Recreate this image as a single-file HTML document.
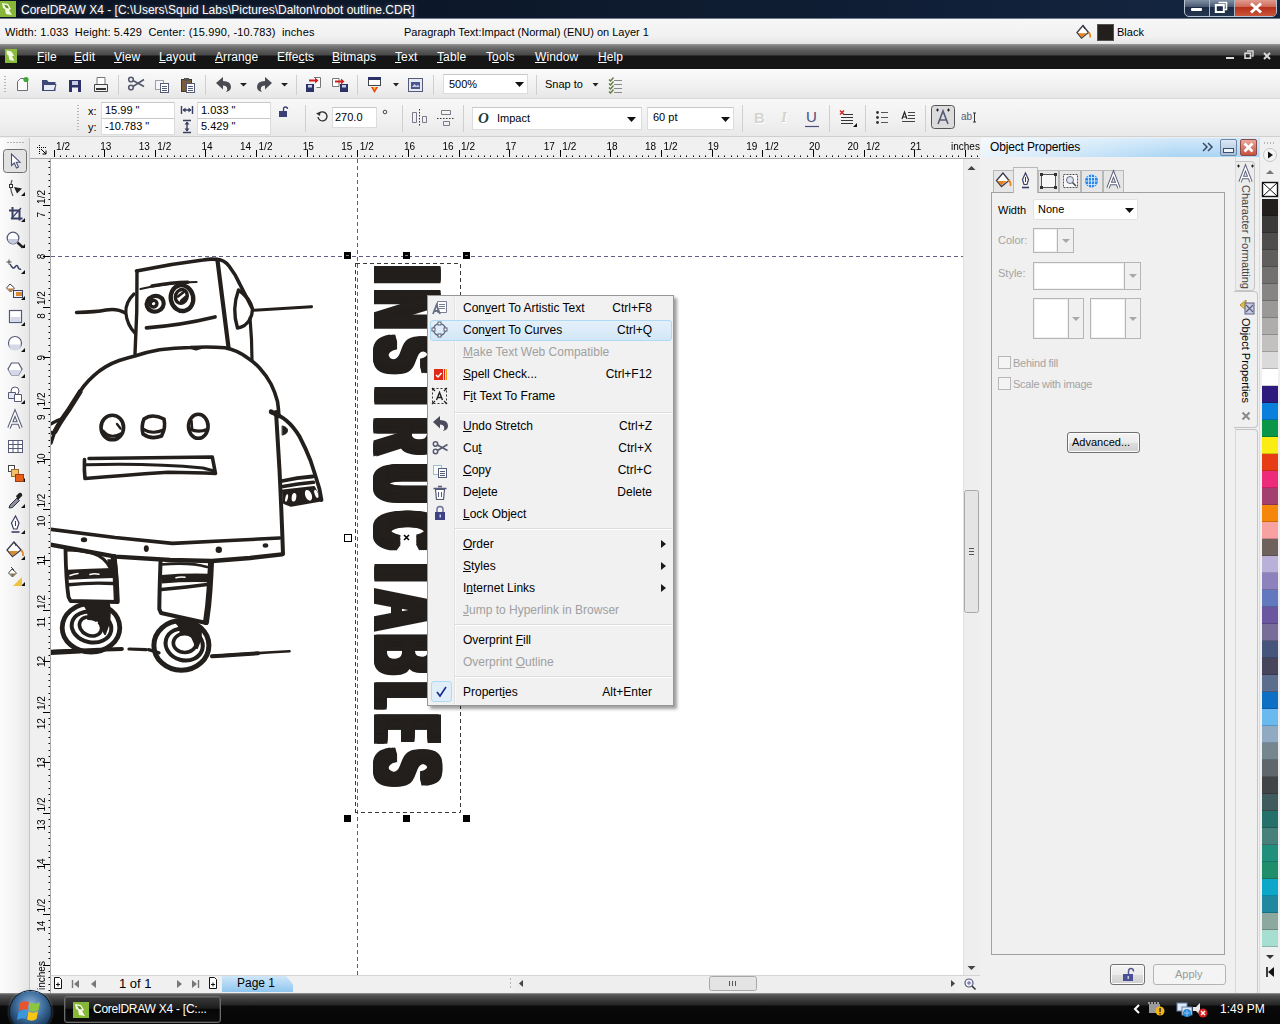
<!DOCTYPE html>
<html lang="en"><head><meta charset="utf-8"><title>CorelDRAW X4 - robot outline.CDR</title>
<style>
*{box-sizing:border-box;margin:0;padding:0}
html,body{width:1280px;height:1024px;overflow:hidden;background:#f0f0f0}
body{font-family:"Liberation Sans",sans-serif;font-size:12px;color:#000}
#screen{position:relative;width:1280px;height:1024px;overflow:hidden;background:#f0f0f0}
.abs{position:absolute}
.t{position:absolute;white-space:nowrap;line-height:1}
u{text-decoration:underline;text-underline-offset:1px}
svg{position:absolute;overflow:visible}
/* title */
#title{position:absolute;left:0;top:0;width:1280px;height:19px;background:linear-gradient(90deg,#0b1424 0%,#0d192c 45%,#11213a 80%,#142640 100%)}
#status{position:absolute;left:0;top:19px;width:1280px;height:25px;background:linear-gradient(#f7f7f7,#f1f1f1 70%,#e4e4e4)}
#menubar{position:absolute;left:0;top:44px;width:1280px;height:25px;background:linear-gradient(#9a9a9a 0,#7a7a7a 2px,#5e5e5e 6px,#474747 11px,#151515 12px,#151515 100%)}
#menubar .t{color:#fff;font-size:12px;top:7px;letter-spacing:.1px}
#toolbar{position:absolute;left:0;top:69px;width:1280px;height:30px;background:linear-gradient(#fbfbfb,#f0f0f0 60%,#e6e6e6)}
#propbar{position:absolute;left:0;top:99px;width:1280px;height:38px;background:linear-gradient(#f8f8f8,#f0f0f0 60%,#e9e9e9);border-bottom:1px solid #d0d0d0}
.inp{position:absolute;background:#fff;border:1px solid #dcdcdc;border-top-color:#c8c8c8;font-size:12px;line-height:14px;padding-left:3px;white-space:nowrap}
.sep{position:absolute;width:1px;background:#cfcfcf}
#ctx{position:absolute;left:427px;top:295px;width:247px;height:411px;background:#f1f1f1;border:1px solid #979797;box-shadow:3px 3px 3px rgba(0,0,0,.38);font-size:12px}
#ctx .mi{position:absolute;left:35px;white-space:nowrap;line-height:14px;height:14px}
#ctx .sc{position:absolute;right:21px;white-space:nowrap;line-height:14px;height:14px}
#ctx .g{color:#a0a0a0}
#ctx .sp{position:absolute;left:27px;right:1px;height:2px;border-top:1px solid #dcdcdc;background:#fff}
#ctx .ar{position:absolute;left:233px;width:0;height:0;border-left:5px solid #1a1a1a;border-top:4px solid transparent;border-bottom:4px solid transparent}
#docker{position:absolute;left:981px;top:138px;width:278px;height:855px;background:#f0f0f0;font-size:11px}
#docker .lbl{position:absolute;white-space:nowrap;line-height:12px}
#docker .gr{color:#a3a3a3}
.dbox{position:absolute;background:#fff;border:1px solid #b5b5b5;box-shadow:inset 0 0 0 1px #f0f0f0}
.ddrop{position:absolute;background:#f0f0f0;border:1px solid #b5b5b5}
.ddrop:after{content:"";position:absolute;left:50%;top:50%;margin:-2px 0 0 -4px;border-top:4px solid #a8a8a8;border-left:4px solid transparent;border-right:4px solid transparent}

</style></head>
<body>
<div id="screen">
<div id="title">
  <svg style="left:0;top:1px" width="17" height="17" viewBox="0 0 17 17"><rect x="0" y="0" width="16" height="16" fill="#86b738"/><path d="M2 2 L8 3 L11 8 L9 9 L12 14 L6 13 L5 8 L3 7 Z" fill="#f4f9e4"/><path d="M4 3.5 L7.5 4.5 L9 7.5 L6 7 Z" fill="#5e8f1e"/></svg>
  <div class="t" style="left:21px;top:4px;font-size:12px;color:#fff;letter-spacing:0;text-shadow:0 0 4px rgba(255,255,255,.35)">CorelDRAW X4 - [C:\Users\Squid Labs\Pictures\Dalton\robot outline.CDR]</div>
  <div class="abs" style="left:1184px;top:-2px;width:93px;height:19px;border:1px solid #b9c3d1;border-radius:0 0 5px 5px;background:linear-gradient(#8a98ac,#4a5a72 45%,#1c2b44 50%,#253650)"></div>
  <div class="abs" style="left:1209px;top:0;width:1px;height:16px;background:#aab4c3"></div>
  <div class="abs" style="left:1234px;top:0;width:1px;height:16px;background:#aab4c3"></div>
  <div class="abs" style="left:1235px;top:-1px;width:41px;height:17px;border-radius:0 0 4px 0;background:linear-gradient(#e2a496,#cf6a58 45%,#b8311c 50%,#c8553a)"></div>
  <div class="abs" style="left:1191px;top:8px;width:11px;height:3px;background:#fff;border-radius:1px"></div>
  <svg style="left:1214px;top:1px" width="14" height="13" viewBox="0 0 14 13"><path d="M4.5 1.5h8v7h-2" fill="none" stroke="#fff" stroke-width="1.6"/><rect x="1.8" y="4" width="8" height="7" fill="none" stroke="#fff" stroke-width="2"/></svg>
  <svg style="left:1249px;top:2px" width="14" height="12" viewBox="0 0 14 12"><path d="M2 1.5L12 10.5M12 1.5L2 10.5" stroke="#fff" stroke-width="3"/></svg>
</div>
<div class="abs" style="left:0;top:18px;width:1280px;height:1px;background:#6d7a8c"></div>
<div id="status">
  <div class="t" style="left:5px;top:8px;font-size:11px;letter-spacing:0.14px">Width: 1.033&nbsp; Height: 5.429&nbsp; Center: (15.990, -10.783)&nbsp; inches</div>
  <div class="t" style="left:404px;top:8px;font-size:11px">Paragraph Text:Impact (Normal) (ENU) on Layer 1</div>
  <svg style="left:1075px;top:5px" width="18" height="16" viewBox="0 0 18 16"><path d="M8 1.5l-6 7 4.5 5.5 7-5.5z" fill="#fff" stroke="#3a3a4a" stroke-width="1.3"/><path d="M3.2 9.2h8.6l-5.3 4.3z" fill="#e8821e"/><path d="M8 1.5l2 3.5" stroke="#3a3a4a" stroke-width="1.3" fill="none"/><path d="M13.5 8.5q2.2 1.5 1.7 5" stroke="#e8821e" stroke-width="1.6" fill="none"/></svg>
  <div class="abs" style="left:1097px;top:5px;width:17px;height:17px;background:#231f1c;border:1px solid #55504c"></div>
  <div class="t" style="left:1117px;top:8px;font-size:11px">Black</div>
</div>
<div class="abs" style="left:0;top:44px;width:1280px;height:1px;background:#4a4a4a"></div>
<div id="menubar">
  <svg style="left:4px;top:4px" width="14" height="16" viewBox="0 0 14 16"><rect x="1" y="1" width="12" height="14" fill="#8bbb3d"/><path d="M2.5 2.5l5 1 2.5 4-2 1 2.5 4.5-5-1-1-4.5-1.5-1z" fill="#f4f9e4"/></svg>
  <div class="t" style="left:37px"><u>F</u>ile</div>
  <div class="t" style="left:74px"><u>E</u>dit</div>
  <div class="t" style="left:114px"><u>V</u>iew</div>
  <div class="t" style="left:159px"><u>L</u>ayout</div>
  <div class="t" style="left:215px"><u>A</u>rrange</div>
  <div class="t" style="left:277px">Effe<u>c</u>ts</div>
  <div class="t" style="left:332px"><u>B</u>itmaps</div>
  <div class="t" style="left:395px"><u>T</u>ext</div>
  <div class="t" style="left:437px"><u>T</u>able</div>
  <div class="t" style="left:486px">T<u>o</u>ols</div>
  <div class="t" style="left:535px"><u>W</u>indow</div>
  <div class="t" style="left:598px"><u>H</u>elp</div>
  <div class="abs" style="left:1226px;top:13px;width:8px;height:2px;background:#d8d8d8"></div>
  <svg style="left:1244px;top:6px" width="10" height="10" viewBox="0 0 10 10"><path d="M3 1h6v5h-1.5" fill="none" stroke="#d8d8d8" stroke-width="1.4"/><rect x="1" y="3.2" width="5.5" height="5" fill="none" stroke="#d8d8d8" stroke-width="1.6"/></svg>
  <svg style="left:1263px;top:8px" width="8" height="8" viewBox="0 0 8 8"><path d="M1 1l6 6M7 1l-6 6" stroke="#d8d8d8" stroke-width="2"/></svg>
</div>

<div id="toolbar">
  <svg style="left:0;top:0" width="640" height="30" viewBox="0 0 640 30">
    <g fill="#b5b5b5"><rect x="4" y="7" width="2" height="1"/><rect x="4" y="10" width="2" height="1"/><rect x="4" y="13" width="2" height="1"/><rect x="4" y="16" width="2" height="1"/><rect x="4" y="19" width="2" height="1"/><rect x="4" y="22" width="2" height="1"/></g>
    <!-- new -->
    <path d="M17.5 12.5l3-3h7v12h-10z" fill="#fbfbfb" stroke="#6b6b7a" stroke-width="1"/><circle cx="26" cy="10.5" r="2.6" fill="#3fa63a"/>
    <!-- open -->
    <path d="M42 11h5l1.5 2h7v9H42z" fill="#3d4a78"/><path d="M43.5 15.500h12.500l-2 6h-10.500z" fill="#e9ecf5" stroke="#3d4a78" stroke-width="1"/>
    <!-- save -->
    <rect x="69" y="11" width="12" height="12" fill="#2c3266"/><rect x="72" y="12" width="6" height="4" fill="#c9cde6"/><rect x="72" y="18.500" width="6" height="4.500" fill="#f2f2f8"/>
    <!-- print -->
    <path d="M97 8.500h8v7h-8z" fill="#fff" stroke="#777" stroke-width="1"/><path d="M94.500 15.500h13v7h-13z" fill="#f3f3f3" stroke="#444" stroke-width="1"/><rect x="96" y="19" width="10" height="2" fill="#333"/>
    <rect x="118" y="6" width="1" height="20" fill="#cfcfcf"/>
    <!-- cut -->
    <g fill="none" stroke="#555a70" stroke-width="1.600"><circle cx="131" cy="10.500" r="2.300"/><circle cx="131" cy="18.500" r="2.300"/><path d="M133 11.500l11 6M133 17.500l11-7"/></g>
    <!-- copy -->
    <rect x="155.500" y="11.500" width="8" height="9" fill="#f5f5f8" stroke="#9a9fb0"/><rect x="160.500" y="14.500" width="8" height="9" fill="#fff" stroke="#555a78"/><path d="M162 17.500h5M162 19.500h5M162 21.500h5" stroke="#555a78" stroke-width="1"/>
    <!-- paste -->
    <rect x="181.500" y="10.500" width="10" height="12" fill="#7a5b3a" stroke="#4a3826"/><rect x="184" y="9" width="5" height="3" fill="#555"/><rect x="186.500" y="14.500" width="8" height="9" fill="#fff" stroke="#555a78"/><path d="M188 17.500h5M188 19.500h5M188 21.500h5" stroke="#555a78" stroke-width="1"/>
    <rect x="205" y="6" width="1" height="20" fill="#cfcfcf"/>
    <!-- undo -->
    <path d="M216 14l7-6v4q8 0 8 6q0 4-5 5q2-2 1-4.500q-1-2-4-2v4z" fill="#4a4a52"/>
    <path d="M240 14h7l-3.500 3.500z" fill="#222"/>
    <!-- redo -->
    <path d="M272 14l-7-6v4q-8 0-8 6q0 4 5 5q-2-2-1-4.500q1-2 4-2v4z" fill="#4a4a52"/>
    <path d="M281 14h7l-3.500 3.500z" fill="#222"/>
    <rect x="296" y="6" width="1" height="20" fill="#cfcfcf"/>
    <!-- import -->
    <rect x="306" y="15" width="8" height="8" fill="#2c3266"/><rect x="308" y="16" width="4" height="2.500" fill="#c9cde6"/><path d="M314 8.500h6.500v10h-4" fill="#fff" stroke="#777"/><path d="M309 11.500h7" stroke="#d02020" stroke-width="2"/><path d="M315 8.500l3.500 3-3.500 3z" fill="#d02020"/>
    <!-- export -->
    <rect x="340" y="15" width="8" height="8" fill="#2c3266"/><rect x="342" y="16" width="4" height="2.500" fill="#c9cde6"/><path d="M332.500 9.500h6.500v8h-6.500z" fill="#fff" stroke="#777"/><path d="M335 12.500h7" stroke="#d02020" stroke-width="2"/><path d="M341 9.500l3.500 3-3.500 3z" fill="#d02020"/>
    <rect x="357" y="6" width="1" height="20" fill="#cfcfcf"/>
    <!-- launcher -->
    <rect x="368.500" y="8.500" width="12" height="8" fill="#fff" stroke="#444"/><rect x="368" y="8" width="13" height="3" fill="#2c3266"/><path d="M371 18h7l-3.500 6z" fill="#e8401a"/><path d="M373 18h3l-1.500 3.500z" fill="#f9c21a"/>
    <path d="M393 14h6l-3 3.500z" fill="#222"/>
    <!-- welcome -->
    <rect x="408.500" y="9.500" width="14" height="13" fill="#e6e8f2" stroke="#555a78"/><rect x="411" y="13" width="9" height="7" fill="#4a5590"/><path d="M412 18l2.500-3 2 2 1.500-1.500 1.500 2.500z" fill="#c9cde6"/>
    <rect x="433" y="6" width="1" height="20" fill="#cfcfcf"/>
    <rect x="536" y="6" width="1" height="20" fill="#cfcfcf"/>
    <path d="M592.500 14h6l-3 3.500z" fill="#222"/>
    <!-- snap icon -->
    <g stroke="#888" stroke-width="1"><path d="M614 11.500h8M614 15.500h8M614 19.500h8M614 23.500h8"/></g><g stroke="#5a7a3a" stroke-width="1.300" fill="none"><path d="M609 10.500l1.500 1.500 3-3.500M609 14.500l1.500 1.500 3-3.500M609 18.500l1.500 1.500 3-3.500M609 22.500l1.500 1.500 3-3.500"/></g>
  </svg>
  <div class="inp" style="left:443px;top:5px;width:85px;height:20px;padding-left:5px;line-height:18px;font-size:11px">500%</div>
  <svg style="left:515px;top:13px" width="9" height="5" viewBox="0 0 9 5"><path d="M0 0h9l-4.500 5z" fill="#111"/></svg>
  <div class="t" style="left:545px;top:10px;font-size:11px">Snap to</div>
</div>
<div class="abs" style="left:0;top:98px;width:1280px;height:1px;background:#dadada"></div>
<div id="propbar">
  <svg style="left:0;top:0" width="1000" height="38" viewBox="0 0 1000 38">
    <g fill="#b5b5b5"><rect x="77" y="6" width="2" height="1"/><rect x="77" y="9" width="2" height="1"/><rect x="77" y="12" width="2" height="1"/><rect x="77" y="15" width="2" height="1"/><rect x="77" y="18" width="2" height="1"/><rect x="77" y="21" width="2" height="1"/><rect x="77" y="24" width="2" height="1"/><rect x="77" y="27" width="2" height="1"/><rect x="77" y="30" width="2" height="1"/></g>
    <!-- width icon -->
    <path d="M181.500 7v8M192.500 7v8M183 11h8" stroke="#3a4060" stroke-width="1.400"/><path d="M182.500 11l3-2.500v5zM191.500 11l-3-2.500v5z" fill="#3a4060"/>
    <path d="M183 21.500h8M183 33.500h8M187 23v9" stroke="#3a4060" stroke-width="1.400"/><path d="M187 22.500l-2.500 3h5zM187 32.500l-2.500-3h5z" fill="#3a4060"/>
    <!-- lock -->
    <rect x="279" y="12" width="8" height="6" fill="#3a3f78"/><path d="M283.500 12v-2q0-2 2-2t2 2" fill="none" stroke="#3a3f78" stroke-width="1.300"/>
    <rect x="305" y="6" width="1" height="27" fill="#cfcfcf"/>
    <!-- rotate -->
    <path d="M318 18a4.500 4.500 0 1 0 1.500-4" fill="none" stroke="#333" stroke-width="1.400"/><path d="M316 14.500l4.500-2-0.500 4.500z" fill="#333"/>
    <circle cx="385" cy="13" r="1.800" fill="none" stroke="#444" stroke-width="1"/>
    <rect x="402" y="6" width="1" height="27" fill="#cfcfcf"/>
    <!-- mirror icons -->
    <g fill="none" stroke="#7a7a8a" stroke-width="1"><path d="M412.500 13.500h4v10h-4zM422.500 17.500h4v6h-4z"/><path d="M419.500 10v17" stroke-dasharray="1.500 1.500" stroke="#333"/></g>
    <g fill="none" stroke="#7a7a8a" stroke-width="1"><path d="M441.500 11.500h9v4h-9zM443.500 22.500h6v4h-6z"/><path d="M437 19.500h17" stroke-dasharray="1.500 1.500" stroke="#333"/></g>
    <rect x="463" y="6" width="1" height="27" fill="#cfcfcf"/>
    <rect x="742" y="6" width="1" height="27" fill="#cfcfcf"/>
    <rect x="829" y="6" width="1" height="27" fill="#cfcfcf"/>
    <!-- U underline -->
    <path d="M805 27.500h14" stroke="#4a4f80" stroke-width="1.200"/>
    <!-- lines with red x -->
    <g stroke="#333" stroke-width="1.200"><path d="M843 15.500h10M841 18.500h12M841 21.500h12M841 24.500h12"/></g><path d="M840 11.500l4 4M844 11.500l-4 4" stroke="#d02020" stroke-width="1.400"/><path d="M857 24v4h-4z" fill="#111"/>
    <rect x="865" y="6" width="1" height="27" fill="#cfcfcf"/>
    <!-- bullets -->
    <g fill="#333"><circle cx="877.500" cy="13.500" r="1.400"/><circle cx="877.500" cy="18.500" r="1.400"/><circle cx="877.500" cy="23.500" r="1.400"/></g><g stroke="#555" stroke-width="1.200"><path d="M881 13.500h7M881 18.500h7M881 23.500h7"/></g>
    <!-- dropcap -->
    <g stroke="#444" stroke-width="1"><path d="M908 13.500h7M908 16.500h7M908 19.500h7M902 22.500h13"/></g><path d="M902 20l2.500-7 2.500 7M903 18h3" stroke="#222" stroke-width="1.200" fill="none"/>
    <rect x="925" y="6" width="1" height="27" fill="#cfcfcf"/>
    <!-- A frame button -->
    <rect x="931.500" y="6.500" width="23" height="23" rx="3" fill="#dcdcdc" stroke="#555"/>
    <path d="M938 25l5-13 5 13M940 21h6" fill="none" stroke="#555a78" stroke-width="1.600"/><path d="M936 11h3M937.500 9.500v3M947 11h3M948.500 9.500v3" stroke="#222" stroke-width="1"/>
    <path d="M974.500 14v9M973 14h3M973 23h3" stroke="#333" stroke-width="1"/>
  </svg>
  <div class="t" style="left:88px;top:7px;font-size:11px">x:</div>
  <div class="t" style="left:88px;top:23px;font-size:11px">y:</div>
  <div class="inp" style="left:101px;top:3px;width:74px;height:17px;font-size:11px;line-height:15px">15.99 "</div>
  <div class="inp" style="left:101px;top:19px;width:74px;height:17px;font-size:11px;line-height:15px">-10.783 "</div>
  <div class="inp" style="left:197px;top:3px;width:74px;height:17px;font-size:11px;line-height:15px">1.033 "</div>
  <div class="inp" style="left:197px;top:19px;width:74px;height:17px;font-size:11px;line-height:15px">5.429 "</div>
  <div class="inp" style="left:332px;top:8px;width:45px;height:21px;font-size:11px;line-height:19px;padding-left:2px">270.0</div>
  <div class="inp" style="left:472px;top:8px;width:170px;height:23px;font-size:11px;line-height:21px;padding-left:24px">Impact</div>
  <div class="t" style="left:478px;top:12px;font-family:'Liberation Serif',serif;font-style:italic;font-weight:bold;font-size:15px;color:#1c3b34">O</div>
  <svg style="left:627px;top:18px" width="9" height="5" viewBox="0 0 9 5"><path d="M0 0h9l-4.500 5z" fill="#111"/></svg>
  <div class="inp" style="left:647px;top:8px;width:87px;height:23px;font-size:11px;line-height:19px;padding-left:5px">60 pt</div>
  <svg style="left:721px;top:18px" width="9" height="5" viewBox="0 0 9 5"><path d="M0 0h9l-4.500 5z" fill="#111"/></svg>
  <div class="t" style="left:754px;top:11px;font-size:15px;font-weight:bold;color:#d4d4d4;text-shadow:1px 1px 0 #fff">B</div>
  <div class="t" style="left:781px;top:11px;font-size:15px;font-weight:bold;font-style:italic;color:#d4d4d4;font-family:'Liberation Serif',serif;text-shadow:1px 1px 0 #fff">I</div>
  <div class="t" style="left:806px;top:10px;font-size:15px;color:#4a4f80">U</div>
  <div class="t" style="left:961px;top:13px;font-size:10px;color:#555a78">ab</div>
</div>

<!-- toolbox -->
<div class="abs" style="left:0;top:138px;width:30px;height:855px;background:linear-gradient(90deg,#fcfcfc,#f2f2f2 60%,#e6e6e6);border-right:1px solid #c4c4c4"></div>
<!-- canvas -->
<div class="abs" style="left:51px;top:159px;width:912px;height:816px;background:#fff"></div>
<div class="abs" style="left:30px;top:138px;width:950px;height:21px;background:#f0f0f0;border-bottom:1px solid #a8a8a8"></div>
<div class="abs" style="left:30px;top:159px;width:21px;height:834px;background:#f0f0f0;border-right:1px solid #a8a8a8"></div>
<svg style="left:0;top:0;filter:grayscale(1)" width="1280" height="1024" viewBox="0 0 1280 1024" font-family="Liberation Sans, sans-serif" font-size="10" fill="#000">
<path d="M54.5 150v7M60.5 155.5v1.500M66.5 155.5v1.500M73.5 155.5v1.500M79.5 155.5v1.500M85.5 155.5v1.500M92.5 155.5v1.500M98.5 155.5v1.500M104.5 150v7M111.5 155.5v1.500M117.5 155.5v1.500M123.5 155.5v1.500M130.5 155.5v1.500M136.5 155.5v1.500M142.5 155.5v1.500M148.5 155.5v1.500M155.5 150v7M161.5 155.5v1.500M167.5 155.5v1.500M174.5 155.5v1.500M180.5 155.5v1.500M186.5 155.5v1.500M193.5 155.5v1.500M199.5 155.5v1.500M205.5 150v7M212.5 155.5v1.500M218.5 155.5v1.500M224.5 155.5v1.500M231.5 155.5v1.500M237.5 155.5v1.500M243.5 155.5v1.500M250.5 155.5v1.500M256.5 150v7M262.5 155.5v1.500M269.5 155.5v1.500M275.5 155.5v1.500M281.5 155.5v1.500M288.5 155.5v1.500M294.5 155.5v1.500M300.5 155.5v1.500M307.5 150v7M313.5 155.5v1.500M319.5 155.5v1.500M326.5 155.5v1.500M332.5 155.5v1.500M338.5 155.5v1.500M345.5 155.5v1.500M351.5 155.5v1.500M357.5 150v7M364.5 155.5v1.500M370.5 155.5v1.500M376.5 155.5v1.500M383.5 155.5v1.500M389.5 155.5v1.500M395.5 155.5v1.500M402.5 155.5v1.500M408.5 150v7M414.5 155.5v1.500M421.5 155.5v1.500M427.5 155.5v1.500M433.5 155.5v1.500M440.5 155.5v1.500M446.5 155.5v1.500M452.5 155.5v1.500M459.5 150v7M465.5 155.5v1.500M471.5 155.5v1.500M478.5 155.5v1.500M484.5 155.5v1.500M490.5 155.5v1.500M497.5 155.5v1.500M503.5 155.5v1.500M509.5 150v7M516.5 155.5v1.500M522.5 155.5v1.500M528.5 155.5v1.500M535.5 155.5v1.500M541.5 155.5v1.500M547.5 155.5v1.500M553.5 155.5v1.500M560.5 150v7M566.5 155.5v1.500M572.5 155.5v1.500M579.5 155.5v1.500M585.5 155.5v1.500M591.5 155.5v1.500M598.5 155.5v1.500M604.5 155.5v1.500M610.5 150v7M617.5 155.5v1.500M623.5 155.5v1.500M629.5 155.5v1.500M636.5 155.5v1.500M642.5 155.5v1.500M648.5 155.5v1.500M655.5 155.5v1.500M661.5 150v7M667.5 155.5v1.500M674.5 155.5v1.500M680.5 155.5v1.500M686.5 155.5v1.500M693.5 155.5v1.500M699.5 155.5v1.500M705.5 155.5v1.500M712.5 150v7M718.5 155.5v1.500M724.5 155.5v1.500M731.5 155.5v1.500M737.5 155.5v1.500M743.5 155.5v1.500M750.5 155.5v1.500M756.5 155.5v1.500M762.5 150v7M769.5 155.5v1.500M775.5 155.5v1.500M781.5 155.5v1.500M788.5 155.5v1.500M794.5 155.5v1.500M800.5 155.5v1.500M807.5 155.5v1.500M813.5 150v7M819.5 155.5v1.500M826.5 155.5v1.500M832.5 155.5v1.500M838.5 155.5v1.500M845.5 155.5v1.500M851.5 155.5v1.500M857.5 155.5v1.500M864.5 150v7M870.5 155.5v1.500M876.5 155.5v1.500M883.5 155.5v1.500M889.5 155.5v1.500M895.5 155.5v1.500M902.5 155.5v1.500M908.5 155.5v1.500M914.5 150v7M921.5 155.5v1.500M927.5 155.5v1.500M933.5 155.5v1.500M940.5 155.5v1.500M946.5 155.5v1.500M952.5 155.5v1.500M958.5 155.5v1.500M965.5 150v7M971.5 155.5v1.500M977.5 155.5v1.500" stroke="#000" stroke-width="1" fill="none"/>
<text x="56.08" y="150">1/2</text>
<text x="105.7" y="150" text-anchor="middle">13</text>
<text x="149.82" y="150" text-anchor="end">13</text>
<text x="157.32" y="150">1/2</text>
<text x="206.95" y="150" text-anchor="middle">14</text>
<text x="251.07" y="150" text-anchor="end">14</text>
<text x="258.57" y="150">1/2</text>
<text x="308.2" y="150" text-anchor="middle">15</text>
<text x="352.32" y="150" text-anchor="end">15</text>
<text x="359.82" y="150">1/2</text>
<text x="409.45" y="150" text-anchor="middle">16</text>
<text x="453.57" y="150" text-anchor="end">16</text>
<text x="461.07" y="150">1/2</text>
<text x="510.7" y="150" text-anchor="middle">17</text>
<text x="554.83" y="150" text-anchor="end">17</text>
<text x="562.33" y="150">1/2</text>
<text x="611.95" y="150" text-anchor="middle">18</text>
<text x="656.08" y="150" text-anchor="end">18</text>
<text x="663.58" y="150">1/2</text>
<text x="713.2" y="150" text-anchor="middle">19</text>
<text x="757.33" y="150" text-anchor="end">19</text>
<text x="764.83" y="150">1/2</text>
<text x="814.45" y="150" text-anchor="middle">20</text>
<text x="858.58" y="150" text-anchor="end">20</text>
<text x="866.08" y="150">1/2</text>
<text x="915.7" y="150" text-anchor="middle">21</text>
<text x="951" y="150">inches</text>
<path d="M37 147.500h9M39.500 145v9" stroke="#000" stroke-width="1" stroke-dasharray="1 1" fill="none"/><path d="M41 149l5 5M46 154v-3.500M46 154h-3.500" stroke="#000" stroke-width="1" fill="none"/>
<path d="M48.500 161.5h1.500M48.500 167.5h1.500M48.500 174.5h1.500M48.500 180.5h1.500M48.500 186.5h1.500M48.500 193.5h1.500M48.500 199.5h1.500M43 205.5h7M48.500 212.5h1.500M48.500 218.5h1.500M48.500 224.5h1.500M48.500 231.5h1.500M48.500 237.5h1.500M48.500 243.5h1.500M48.500 250.5h1.500M43 256.5h7M48.500 262.5h1.500M48.500 269.5h1.500M48.500 275.5h1.500M48.500 281.5h1.500M48.500 288.5h1.500M48.500 294.5h1.500M48.500 300.5h1.500M43 307.5h7M48.500 313.5h1.500M48.500 319.5h1.500M48.500 326.5h1.500M48.500 332.5h1.500M48.500 338.5h1.500M48.500 345.5h1.500M48.500 351.5h1.500M43 357.5h7M48.500 364.5h1.500M48.500 370.5h1.500M48.500 376.5h1.500M48.500 383.5h1.500M48.500 389.5h1.500M48.500 395.5h1.500M48.500 402.5h1.500M43 408.5h7M48.500 414.5h1.500M48.500 421.5h1.500M48.500 427.5h1.500M48.500 433.5h1.500M48.500 440.5h1.500M48.500 446.5h1.500M48.500 452.5h1.500M43 459.5h7M48.500 465.5h1.500M48.500 471.5h1.500M48.500 477.5h1.500M48.500 484.5h1.500M48.500 490.5h1.500M48.500 496.5h1.500M48.500 503.5h1.500M43 509.5h7M48.500 515.5h1.500M48.500 522.5h1.500M48.500 528.5h1.500M48.500 534.5h1.500M48.500 541.5h1.500M48.500 547.5h1.500M48.500 553.5h1.500M43 560.5h7M48.500 566.5h1.500M48.500 572.5h1.500M48.500 579.5h1.500M48.500 585.5h1.500M48.500 591.5h1.500M48.500 598.5h1.500M48.500 604.5h1.500M43 610.5h7M48.500 617.5h1.500M48.500 623.5h1.500M48.500 629.5h1.500M48.500 636.5h1.500M48.500 642.5h1.500M48.500 648.5h1.500M48.500 655.5h1.500M43 661.5h7M48.500 667.5h1.500M48.500 674.5h1.500M48.500 680.5h1.500M48.500 686.5h1.500M48.500 693.5h1.500M48.500 699.5h1.500M48.500 705.5h1.500M43 712.5h7M48.500 718.5h1.500M48.500 724.5h1.500M48.500 731.5h1.500M48.500 737.5h1.500M48.500 743.5h1.500M48.500 750.5h1.500M48.500 756.5h1.500M43 762.5h7M48.500 769.5h1.500M48.500 775.5h1.500M48.500 781.5h1.500M48.500 788.5h1.500M48.500 794.5h1.500M48.500 800.5h1.500M48.500 807.5h1.500M43 813.5h7M48.500 819.5h1.500M48.500 826.5h1.500M48.500 832.5h1.500M48.500 838.5h1.500M48.500 845.5h1.500M48.500 851.5h1.500M48.500 857.5h1.500M43 864.5h7M48.500 870.5h1.500M48.500 876.5h1.500M48.500 882.5h1.500M48.500 889.5h1.500M48.500 895.5h1.500M48.500 901.5h1.500M48.500 908.5h1.500M43 914.5h7M48.500 920.5h1.500M48.500 927.5h1.500M48.500 933.5h1.500M48.500 939.5h1.500M48.500 946.5h1.500M48.500 952.5h1.500M48.500 958.5h1.500M43 965.5h7M48.500 971.5h1.500M48.500 977.5h1.500M48.500 984.5h1.500M48.500 990.5h1.500" stroke="#000" stroke-width="1" fill="none"/>
<text transform="translate(45 211.88) rotate(-90)" text-anchor="end">7</text>
<text transform="translate(45 203.88) rotate(-90)">1/2</text>
<text transform="translate(45 256.5) rotate(-90)" text-anchor="middle">8</text>
<text transform="translate(45 313.12) rotate(-90)" text-anchor="end">8</text>
<text transform="translate(45 305.12) rotate(-90)">1/2</text>
<text transform="translate(45 357.75) rotate(-90)" text-anchor="middle">9</text>
<text transform="translate(45 414.38) rotate(-90)" text-anchor="end">9</text>
<text transform="translate(45 406.38) rotate(-90)">1/2</text>
<text transform="translate(45 459) rotate(-90)" text-anchor="middle">10</text>
<text transform="translate(45 515.62) rotate(-90)" text-anchor="end">10</text>
<text transform="translate(45 507.62) rotate(-90)">1/2</text>
<text transform="translate(45 560.25) rotate(-90)" text-anchor="middle">11</text>
<text transform="translate(45 616.88) rotate(-90)" text-anchor="end">11</text>
<text transform="translate(45 608.88) rotate(-90)">1/2</text>
<text transform="translate(45 661.5) rotate(-90)" text-anchor="middle">12</text>
<text transform="translate(45 718.12) rotate(-90)" text-anchor="end">12</text>
<text transform="translate(45 710.12) rotate(-90)">1/2</text>
<text transform="translate(45 762.75) rotate(-90)" text-anchor="middle">13</text>
<text transform="translate(45 819.38) rotate(-90)" text-anchor="end">13</text>
<text transform="translate(45 811.38) rotate(-90)">1/2</text>
<text transform="translate(45 864) rotate(-90)" text-anchor="middle">14</text>
<text transform="translate(45 920.62) rotate(-90)" text-anchor="end">14</text>
<text transform="translate(45 912.62) rotate(-90)">1/2</text>
<text transform="translate(45 990) rotate(-90)">inches</text>
</svg>
<!-- vertical scrollbar -->
<div class="abs" style="left:963px;top:159px;width:17px;height:816px;background:#eeeeee;border-left:1px solid #e2e2e2"></div>
<!-- nav bar -->
<div class="abs" style="left:51px;top:975px;width:929px;height:18px;background:#f0f0f0;border-top:1px solid #d4d4d4"></div>
<!-- guides -->
<svg style="left:0;top:0" width="1280" height="1024" viewBox="0 0 1280 1024">
  <path d="M51 256.500H963" stroke="#5d5d86" stroke-width="1" stroke-dasharray="4 3" fill="none"/>
  <path d="M357.500 159V975" stroke="#5d5d86" stroke-width="1" stroke-dasharray="4 3" fill="none"/>
</svg>
<div id="bigtext" class="abs" style="left:0;top:0;width:0;height:0;font:bold 100px 'Liberation Sans',sans-serif;color:#231f1c"><span class="t" style="left:0;top:0;transform-origin:0 0;transform:translate(456.74px,263.20px) rotate(90deg) scale(0.4000,0.9710);text-shadow:2.9px 0.0px 0 #231f1c,5.7px 0.0px 0 #231f1c,8.6px 0.0px 0 #231f1c,11.5px 0.0px 0 #231f1c,14.4px 0.0px 0 #231f1c,17.2px 0.0px 0 #231f1c,20.1px 0.0px 0 #231f1c,23.0px 0.0px 0 #231f1c,25.9px 0.0px 0 #231f1c,28.7px 0.0px 0 #231f1c">I</span><span class="t" style="left:0;top:0;transform-origin:0 0;transform:translate(456.74px,286.49px) rotate(90deg) scale(0.5293,0.9710);text-shadow:2.8px 0.0px 0 #231f1c,5.7px 0.0px 0 #231f1c,8.5px 0.0px 0 #231f1c,11.3px 0.0px 0 #231f1c,14.2px 0.0px 0 #231f1c">N</span><span class="t" style="left:0;top:0;transform-origin:0 0;transform:translate(453.18px,333.06px) rotate(90deg) scale(0.5467,0.9006);text-shadow:0.0px -2.8px 0 #231f1c,0.0px 2.8px 0 #231f1c,2.6px -2.8px 0 #231f1c,2.6px 0.0px 0 #231f1c,2.6px 2.8px 0 #231f1c,5.1px -2.8px 0 #231f1c,5.1px 0.0px 0 #231f1c,5.1px 2.8px 0 #231f1c,7.7px -2.8px 0 #231f1c,7.7px 0.0px 0 #231f1c,7.7px 2.8px 0 #231f1c,10.2px -2.8px 0 #231f1c,10.2px 0.0px 0 #231f1c,10.2px 2.8px 0 #231f1c,12.8px -2.8px 0 #231f1c,12.8px 0.0px 0 #231f1c,12.8px 2.8px 0 #231f1c">S</span><span class="t" style="left:0;top:0;transform-origin:0 0;transform:translate(456.74px,377.08px) rotate(90deg) scale(0.4237,0.9710);text-shadow:2.7px 0.0px 0 #231f1c,5.4px 0.0px 0 #231f1c,8.1px 0.0px 0 #231f1c,10.9px 0.0px 0 #231f1c,13.6px 0.0px 0 #231f1c,16.3px 0.0px 0 #231f1c,19.0px 0.0px 0 #231f1c,21.7px 0.0px 0 #231f1c,24.4px 0.0px 0 #231f1c,27.1px 0.0px 0 #231f1c">T</span><span class="t" style="left:0;top:0;transform-origin:0 0;transform:translate(454.54px,415.10px) rotate(90deg) scale(0.4714,0.9275);text-shadow:0.0px -1.6px 0 #231f1c,0.0px 1.6px 0 #231f1c,2.6px -1.6px 0 #231f1c,2.6px 1.6px 0 #231f1c,5.2px -1.6px 0 #231f1c,5.2px 1.6px 0 #231f1c,7.7px -1.6px 0 #231f1c,7.7px 1.6px 0 #231f1c,10.3px -1.6px 0 #231f1c,10.3px 1.6px 0 #231f1c,12.9px -1.6px 0 #231f1c,12.9px 1.6px 0 #231f1c,15.5px -1.6px 0 #231f1c,15.5px 1.6px 0 #231f1c,18.0px -1.6px 0 #231f1c,18.0px 1.6px 0 #231f1c">R</span><span class="t" style="left:0;top:0;transform-origin:0 0;transform:translate(454.55px,461.15px) rotate(90deg) scale(0.4750,0.9282);text-shadow:0.0px -1.6px 0 #231f1c,0.0px 1.6px 0 #231f1c,2.8px -1.6px 0 #231f1c,2.8px 1.6px 0 #231f1c,5.5px -1.6px 0 #231f1c,5.5px 1.6px 0 #231f1c,8.3px -1.6px 0 #231f1c,8.3px 1.6px 0 #231f1c,11.1px -1.6px 0 #231f1c,11.1px 1.6px 0 #231f1c,13.8px -1.6px 0 #231f1c,13.8px 1.6px 0 #231f1c,16.6px -1.6px 0 #231f1c,16.6px 1.6px 0 #231f1c,19.3px -1.6px 0 #231f1c,19.3px 1.6px 0 #231f1c,22.1px -1.6px 0 #231f1c,22.1px 1.6px 0 #231f1c">U</span><span class="t" style="left:0;top:0;transform-origin:0 0;transform:translate(452.47px,508.74px) rotate(90deg) scale(0.4646,0.8865);text-shadow:0.0px -3.4px 0 #231f1c,0.0px -1.1px 0 #231f1c,0.0px 1.1px 0 #231f1c,0.0px 3.4px 0 #231f1c,2.9px -3.4px 0 #231f1c,2.9px -1.1px 0 #231f1c,2.9px 1.1px 0 #231f1c,2.9px 3.4px 0 #231f1c,5.8px -3.4px 0 #231f1c,5.8px -1.1px 0 #231f1c,5.8px 1.1px 0 #231f1c,5.8px 3.4px 0 #231f1c,8.8px -3.4px 0 #231f1c,8.8px -1.1px 0 #231f1c,8.8px 1.1px 0 #231f1c,8.8px 3.4px 0 #231f1c,11.7px -3.4px 0 #231f1c,11.7px -1.1px 0 #231f1c,11.7px 1.1px 0 #231f1c,11.7px 3.4px 0 #231f1c,14.6px -3.4px 0 #231f1c,14.6px -1.1px 0 #231f1c,14.6px 1.1px 0 #231f1c,14.6px 3.4px 0 #231f1c,17.5px -3.4px 0 #231f1c,17.5px -1.1px 0 #231f1c,17.5px 1.1px 0 #231f1c,17.5px 3.4px 0 #231f1c,20.4px -3.4px 0 #231f1c,20.4px -1.1px 0 #231f1c,20.4px 1.1px 0 #231f1c,20.4px 3.4px 0 #231f1c">C</span><span class="t" style="left:0;top:0;transform-origin:0 0;transform:translate(456.74px,554.08px) rotate(90deg) scale(0.4237,0.9710);text-shadow:2.7px 0.0px 0 #231f1c,5.4px 0.0px 0 #231f1c,8.1px 0.0px 0 #231f1c,10.9px 0.0px 0 #231f1c,13.6px 0.0px 0 #231f1c,16.3px 0.0px 0 #231f1c,19.0px 0.0px 0 #231f1c,21.7px 0.0px 0 #231f1c,24.4px 0.0px 0 #231f1c,27.1px 0.0px 0 #231f1c">T</span><span class="t" style="left:0;top:0;transform-origin:0 0;transform:translate(456.74px,586.70px) rotate(90deg) scale(0.5333,0.9710);text-shadow:3.0px 0.0px 0 #231f1c,6.0px 0.0px 0 #231f1c,9.0px 0.0px 0 #231f1c,12.0px 0.0px 0 #231f1c,15.0px 0.0px 0 #231f1c">A</span><span class="t" style="left:0;top:0;transform-origin:0 0;transform:translate(454.54px,631.34px) rotate(90deg) scale(0.5230,0.9275);text-shadow:0.0px -1.6px 0 #231f1c,0.0px 1.6px 0 #231f1c,2.7px -1.6px 0 #231f1c,2.7px 1.6px 0 #231f1c,5.4px -1.6px 0 #231f1c,5.4px 1.6px 0 #231f1c,8.1px -1.6px 0 #231f1c,8.1px 1.6px 0 #231f1c,10.8px -1.6px 0 #231f1c,10.8px 1.6px 0 #231f1c,13.5px -1.6px 0 #231f1c,13.5px 1.6px 0 #231f1c,16.3px -1.6px 0 #231f1c,16.3px 1.6px 0 #231f1c">B</span><span class="t" style="left:0;top:0;transform-origin:0 0;transform:translate(455.27px,680.43px) rotate(90deg) scale(0.3098,0.9420);text-shadow:0.0px -1.1px 0 #231f1c,0.0px 1.1px 0 #231f1c,3.0px -1.1px 0 #231f1c,3.0px 1.1px 0 #231f1c,5.9px -1.1px 0 #231f1c,5.9px 1.1px 0 #231f1c,8.9px -1.1px 0 #231f1c,8.9px 1.1px 0 #231f1c,11.8px -1.1px 0 #231f1c,11.8px 1.1px 0 #231f1c,14.8px -1.1px 0 #231f1c,14.8px 1.1px 0 #231f1c,17.8px -1.1px 0 #231f1c,17.8px 1.1px 0 #231f1c,20.7px -1.1px 0 #231f1c,20.7px 1.1px 0 #231f1c,23.7px -1.1px 0 #231f1c,23.7px 1.1px 0 #231f1c,26.6px -1.1px 0 #231f1c,26.6px 1.1px 0 #231f1c,29.6px -1.1px 0 #231f1c,29.6px 1.1px 0 #231f1c,32.5px -1.1px 0 #231f1c,32.5px 1.1px 0 #231f1c,35.5px -1.1px 0 #231f1c,35.5px 1.1px 0 #231f1c">L</span><span class="t" style="left:0;top:0;transform-origin:0 0;transform:translate(454.91px,712.16px) rotate(90deg) scale(0.3348,0.9348);text-shadow:0.0px -1.3px 0 #231f1c,0.0px 1.3px 0 #231f1c,2.9px -1.3px 0 #231f1c,2.9px 1.3px 0 #231f1c,5.7px -1.3px 0 #231f1c,5.7px 1.3px 0 #231f1c,8.6px -1.3px 0 #231f1c,8.6px 1.3px 0 #231f1c,11.4px -1.3px 0 #231f1c,11.4px 1.3px 0 #231f1c,14.3px -1.3px 0 #231f1c,14.3px 1.3px 0 #231f1c,17.1px -1.3px 0 #231f1c,17.1px 1.3px 0 #231f1c,20.0px -1.3px 0 #231f1c,20.0px 1.3px 0 #231f1c,22.8px -1.3px 0 #231f1c,22.8px 1.3px 0 #231f1c,25.7px -1.3px 0 #231f1c,25.7px 1.3px 0 #231f1c,28.5px -1.3px 0 #231f1c,28.5px 1.3px 0 #231f1c,31.4px -1.3px 0 #231f1c,31.4px 1.3px 0 #231f1c">E</span><span class="t" style="left:0;top:0;transform-origin:0 0;transform:translate(453.18px,746.09px) rotate(90deg) scale(0.5383,0.9006);text-shadow:0.0px -2.8px 0 #231f1c,0.0px 2.8px 0 #231f1c,2.6px -2.8px 0 #231f1c,2.6px 0.0px 0 #231f1c,2.6px 2.8px 0 #231f1c,5.2px -2.8px 0 #231f1c,5.2px 0.0px 0 #231f1c,5.2px 2.8px 0 #231f1c,7.8px -2.8px 0 #231f1c,7.8px 0.0px 0 #231f1c,7.8px 2.8px 0 #231f1c,10.4px -2.8px 0 #231f1c,10.4px 0.0px 0 #231f1c,10.4px 2.8px 0 #231f1c,13.0px -2.8px 0 #231f1c,13.0px 0.0px 0 #231f1c,13.0px 2.8px 0 #231f1c">S</span></div>

<svg id="toolbox" style="left:0;top:138px" width="30" height="470" viewBox="0 138 30 470">
  <g fill="#b5b5b5"><rect x="7" y="142" width="2" height="1"/><rect x="10" y="142" width="2" height="1"/><rect x="13" y="142" width="2" height="1"/><rect x="16" y="142" width="2" height="1"/><rect x="19" y="142" width="2" height="1"/><rect x="22" y="142" width="2" height="1"/></g>
  <rect x="3.500" y="149.500" width="23" height="23" rx="3" fill="#e2e2e2" stroke="#707070"/>
  <path d="M11.500 154v11.500l2.800-2.500 2.200 5 2-1-2.200-4.800h3.700z" fill="#fff" stroke="#4a4f78" stroke-width="1.100"/>
  <g fill="#111"><path d="M25 192v4h-4z"/><path d="M25 218v4h-4z"/><path d="M25 244v4h-4z"/><path d="M25 270v4h-4z"/><path d="M25 296v4h-4z"/><path d="M25 322v4h-4z"/><path d="M25 348v4h-4z"/><path d="M25 374v4h-4z"/><path d="M25 400v4h-4z"/><path d="M25 478v4h-4z"/><path d="M25 504v4h-4z"/><path d="M25 530v4h-4z"/><path d="M25 556v4h-4z"/><path d="M25 582v4h-4z"/></g>
  <!-- shape -->
  <path d="M12 180q-3 8 1 16" fill="none" stroke="#555" stroke-width="1.200"/><rect x="9.500" y="184.500" width="3" height="3" fill="#fff" stroke="#333"/><path d="M14 187l8 1.500-5 5z" fill="#222"/>
  <!-- crop -->
  <path d="M12.500 207v11.500h10M9 210.500h10.500v10" fill="none" stroke="#3a3f68" stroke-width="2"/><path d="M11 219l10-11" stroke="#3a3f68" stroke-width="1.200"/>
  <!-- zoom -->
  <circle cx="13" cy="238" r="5.800" fill="#fff" stroke="#555a78" stroke-width="1.300"/><path d="M8 239h10a5 5 0 0 1-10 0z" fill="#c5c9dc"/><path d="M17.500 242.500l5.500 5" stroke="#222" stroke-width="2.400"/>
  <!-- freehand -->
  <path d="M9 259.500v5M6.500 262h5" stroke="#444" stroke-width="1"/><path d="M10 264q3 6 5 3t3 0t3 2" fill="none" stroke="#3a3f68" stroke-width="1.500"/>
  <!-- smart fill -->
  <path d="M10 284l-3.500 4 4 4 4-4z" fill="#fff" stroke="#444" stroke-width="1"/><path d="M7.500 288.500h6l-3 3z" fill="#c87a28"/><rect x="13.500" y="290.500" width="9" height="7" fill="#f0f0f8" stroke="#3a3f68"/><rect x="16" y="292" width="6" height="4" fill="#d88a30"/>
  <!-- rect -->
  <rect x="9.500" y="310.500" width="12" height="12" fill="#fff" stroke="#555a78" stroke-width="1.200"/><rect x="10.500" y="317" width="10" height="5" fill="#d5d8e6"/>
  <!-- ellipse -->
  <circle cx="15" cy="343" r="6.500" fill="#fff" stroke="#555a78" stroke-width="1.200"/><path d="M9 344.500h12a6 6 0 0 1-12 0z" fill="#d5d8e6"/>
  <!-- polygon -->
  <path d="M8 369l3.500-6h7l3.500 6-3.500 6h-7z" fill="#fff" stroke="#555a78" stroke-width="1.200"/><path d="M8.500 370h13l-3 5h-7z" fill="#d5d8e6"/>
  <!-- basic shapes -->
  <circle cx="15" cy="391" r="4" fill="#fff" stroke="#555a78"/><path d="M8.500 392.500h7v6h-7z" fill="#e8e8f0" stroke="#555a78"/><path d="M14.500 394.500h7v7h-7z" fill="#fff" stroke="#555a78"/>
  <!-- text -->
  <path d="M9 428l6-15 6 15M11.500 423h7" fill="none" stroke="#5a5f7a" stroke-width="3.600"/><path d="M9 428l6-15 6 15M11.500 423h7" fill="none" stroke="#fff" stroke-width="1.500"/>
  <!-- table -->
  <rect x="8.500" y="440.500" width="14" height="12" fill="#fff" stroke="#555a78"/><path d="M8.500 444.500h14M8.500 448.500h14M13 440.500v12M18 440.500v12" stroke="#555a78" stroke-width="1"/>
  <!-- blend -->
  <rect x="8.500" y="465.500" width="6" height="6" fill="#fff" stroke="#444"/><rect x="11.500" y="469.500" width="7" height="7" fill="#f0c070" stroke="#a06a20"/><rect x="15.500" y="474.500" width="8" height="7" fill="#e8601a" stroke="#a03a10"/>
  <!-- eyedropper -->
  <path d="M9 508l1-3 7-7 2.500 2.500-7 7z" fill="#8a8fa8" stroke="#333" stroke-width="1"/><path d="M16 496l3-3q2-1 3 1t-1 3l-3 3z" fill="#222"/>
  <!-- outline pen -->
  <path d="M15.500 516l3.500 7-2 6h-3.500l-2-6z" fill="#fff" stroke="#3a3f60" stroke-width="1.200"/><path d="M15.500 521v5" stroke="#3a3f60"/><path d="M11.500 532h8" stroke="#3a3f60" stroke-width="1.600"/>
  <!-- fill -->
  <path d="M14 542l-7 8 5.500 6.500 8.500-6.500z" fill="#fff" stroke="#3a3a4a" stroke-width="1.300"/><path d="M8.500 551h10l-6 5z" fill="#d88a30"/><path d="M14 542l2 4" stroke="#3a3a4a"/><path d="M21 550q2.500 2 2 6" stroke="#d88a30" stroke-width="1.700" fill="none"/>
  <!-- interactive fill -->
  <path d="M12 569l-3.500 4 4 4 4-4z" fill="#fff" stroke="#444" stroke-width="1"/><path d="M10 573.500h5.500l-3 3z" fill="#8a6a48"/><path d="M13 586l9-9v9z" fill="#f0c040"/><path d="M11 567l3 3" stroke="#444"/>
</svg>
<!-- text frame + handles -->
<svg style="left:0;top:0" width="1280" height="1024" viewBox="0 0 1280 1024">
  <path d="M356 263.500H460.500V812.500H356" fill="none" stroke="#3a3a3a" stroke-width="1" stroke-dasharray="4 3"/>
  <path d="M355.500 263V813" fill="none" stroke="#3a3a3a" stroke-width="1" stroke-dasharray="4 3"/>
  <g fill="#000"><rect x="344" y="252" width="7" height="7"/><rect x="403" y="252" width="7" height="7"/><rect x="463" y="252" width="7" height="7"/><rect x="344" y="815" width="7" height="7"/><rect x="403" y="815" width="7" height="7"/><rect x="463" y="815" width="7" height="7"/></g>
  <g fill="#777"><rect x="346" y="255" width="3" height="1"/><rect x="405" y="255" width="3" height="1"/><rect x="465" y="255" width="3" height="1"/></g>
  <rect x="344.500" y="534.500" width="7" height="7" fill="#fff" stroke="#000"/>
  <path d="M404 535l5 5M409 535l-5 5" stroke="#000" stroke-width="1.600"/>
</svg>
<!-- scroll + nav -->
<svg style="left:0;top:0" width="1280" height="1024" viewBox="0 0 1280 1024">
  <path d="M967.500 170l4-4 4 4z" fill="#444"/><path d="M967.500 966h8l-4 4z" fill="#444"/>
  <rect x="964.500" y="490.500" width="14" height="122" rx="2" fill="#e4e4e4" stroke="#a8a8a8"/><path d="M969 548.500h5M969 551.500h5M969 554.500h5" stroke="#555" stroke-width="1"/>
  <circle cx="969" cy="983" r="4" fill="#eef" stroke="#555a78" stroke-width="1.200"/><path d="M972 986l3.500 3.500" stroke="#333" stroke-width="1.600"/><path d="M967 983h4M969 981v4" stroke="#555a78" stroke-width=".9"/>
  <!-- h scroll -->
  <rect x="515" y="976" width="440" height="17" fill="#eeeeee"/>
  <path d="M523 980v7l-4-3.500z" fill="#444"/><path d="M951 980v7l4-3.500z" fill="#444"/>
  <rect x="709.500" y="976.500" width="47" height="14" rx="2" fill="#e4e4e4" stroke="#a8a8a8"/><path d="M729.500 981v5M732.500 981v5M735.500 981v5" stroke="#555" stroke-width="1"/>
  <g fill="#b5b5b5"><rect x="510" y="978" width="1" height="2"/><rect x="510" y="982" width="1" height="2"/><rect x="510" y="986" width="1" height="2"/></g>
  <!-- nav icons -->
  <path d="M54.500 977.500h5l2 2v9h-7z" fill="#fff" stroke="#111" stroke-width="1"/><path d="M56 984.500h4M58 982.500v4" stroke="#111" stroke-width="1"/>
  <path d="M72.500 980v8" stroke="#777" stroke-width="1.400"/><path d="M79 980v8l-5-4z" fill="#777"/>
  <path d="M96 980v8l-5-4z" fill="#777"/>
  <path d="M177 980v8l5-4z" fill="#777"/>
  <path d="M192 980v8l5-4z" fill="#777"/><path d="M198.500 980v8" stroke="#777" stroke-width="1.400"/>
  <path d="M209.500 977.500h5l2 2v9h-7z" fill="#fff" stroke="#111" stroke-width="1"/><path d="M211 984.500h4M213 982.500v4" stroke="#111" stroke-width="1"/>
  <defs><linearGradient id="pg" x1="0" y1="0" x2="0" y2="1"><stop offset="0" stop-color="#cfe7f9"/><stop offset="1" stop-color="#8fc6ee"/></linearGradient></defs>
  <path d="M222 976h64l7 8.500v7.500h-71z" fill="url(#pg)"/>
</svg>
<div class="t" style="left:119px;top:977px;font-size:13px">1 of 1</div>
<div class="t" style="left:237px;top:977px;font-size:12px">Page 1</div>

<svg id="robot" style="left:0;top:0" width="1280" height="1024" viewBox="0 0 1280 1024">
<defs><clipPath id="cv"><rect x="51" y="159" width="912" height="816"/></clipPath></defs>
<g clip-path="url(#cv)" fill="none" stroke="#231f1c" stroke-width="3" stroke-linecap="round" stroke-linejoin="round">
  <!-- head front -->
  <path d="M136.500 271 Q170 264 203 260 Q212 258.500 217 259.500" stroke-width="3.600"/>
  <path d="M137 271 Q137.500 312 135 354" stroke-width="3.400"/>
  <path d="M217.500 260.500 Q223 305 228.500 347.500" stroke-width="4.200"/>
  <!-- head side -->
  <path d="M216 259.300 Q224 259.500 229 266 Q236 275 240 284.500 Q246 296 251.500 307" stroke-width="3.600"/>
  <path d="M250 318 Q252 340 252 360" stroke-width="3.200"/>
  <!-- right ear -->
  <path d="M238.500 290 Q250 298 252.500 309 Q252 320 244.500 325.500 Q241 327.500 237.500 328 Q231.500 309 238.500 290 Z" stroke-width="3.400"/>
  <!-- right antenna -->
  <path d="M253 310.300 Q285 308.500 311.500 306.800" stroke-width="3"/>
  <path d="M290 308 L312 306.500" stroke-width="1.600"/>
  <!-- left ear -->
  <path d="M134 294 Q125.500 302 125.800 312.500 Q127 325 135 333" stroke-width="3.200"/>
  <!-- left antenna -->
  <path d="M76.500 312.500 Q96 312 106 310 Q117 308 125.500 313" stroke-width="3.400"/>
  <!-- eyebrow -->
  <path d="M140.500 289 Q168 282.300 196.500 282" stroke-width="2.200"/>
  <path d="M152 286 Q172 282.300 188 282.200" stroke-width="3.600"/>
  <!-- eyes -->
  <ellipse cx="155.200" cy="303.800" rx="8.600" ry="7.800" stroke-width="4.200" transform="rotate(-20 155.200 303.800)"/>
  <ellipse cx="153.600" cy="303.700" rx="3.400" ry="3.200" stroke-width="3.400" transform="rotate(-30 153.600 303.700)"/>
  <path d="M148 301.500 l6 -5" stroke-width="2.200"/>
  <ellipse cx="182" cy="298.100" rx="11.200" ry="13" stroke-width="4.400" transform="rotate(-12 182 298.100)"/>
  <ellipse cx="181.300" cy="296.400" rx="5.800" ry="7" stroke-width="3.400" transform="rotate(20 181.300 296.400)"/>
  <path d="M178 296.500 l7 -5.500" stroke-width="2.600"/>
  <path d="M181.500 301 l4.500 -4" stroke-width="3.400"/>
  <!-- mouth -->
  <path d="M146.500 327.800 Q180 325.500 215 317" stroke-width="3.800"/>
  <!-- body dome -->
  <path d="M54 433 Q58 425 62.600 418.100 Q65.500 414 68.400 410.300 Q72 404 76.300 397.600 Q80 391 84 385.900 Q88.500 380.300 93.800 375.600 Q99 370.800 105.500 366.900 Q112 363 119.200 360.500 Q127 358 134.800 356 Q147 352 159.500 349.800 Q175 348 190 347.500 Q208 346.500 225 347.700 Q237 350 247 357.500 Q254 362 260 368.500 Q266 375 271 384 Q275 392 277.500 401.500 Q278.500 408 278.800 414.500" stroke-width="3.600"/>
  <path d="M55 431.500 Q60 422 68.400 410.300 L80 392" stroke-width="5"/>
  <path d="M276 412 Q278 445 279.500 470 Q281.500 510 283 554" stroke-width="4"/>
  <path d="M190 347.500 l6 1.800 l5 -1.500" stroke-width="2.400"/>
  <!-- left shoulder -->
  <path d="M50 424.500 Q56 420.500 62.500 418.500" stroke-width="3.200"/><path d="M50 432 L54 434 L51 443" stroke-width="3.400"/>
  <!-- buttons -->
  <ellipse cx="112.300" cy="427.500" rx="11.300" ry="12.300" stroke-width="3.600"/>
  <path d="M103 431 Q110 440 121.500 433.500" stroke-width="3"/>
  <path d="M117 424 l3.500 4.500" stroke-width="2.400"/>
  <path d="M144 419 Q152 413 164 419 Q166 428 161.500 436 Q151 440 143 434 Q141 426 144 419 Z" stroke-width="3.600"/>
  <path d="M143 429 Q152 435 163.500 430" stroke-width="3"/>
  <ellipse cx="198.300" cy="426.300" rx="9.800" ry="12" stroke-width="3.600"/>
  <path d="M190 429 Q198 433 207 429.500" stroke-width="3.200"/>
  <path d="M191.500 421 l0.500 8" stroke-width="2.600"/>
  <!-- chest plate -->
  <path d="M84.500 459.500 Q84 470 85 478.500 Q120 475.500 168 472.300 Q195 472.500 215.500 473.500 L212.300 457 Q150 458 89 458.500" stroke-width="3.600"/>
  <path d="M86 464.800 Q150 463 203 468 L214 471" stroke-width="3"/>
  <!-- right arm -->
  <path d="M271 412.300 Q288 417 299.500 436.500 Q306 449 310.500 460.500 Q315 474 319.500 489 L321.500 500" stroke-width="3.800"/>
  <path d="M271 411.500 l8 4.500" stroke-width="4.400"/>
  <path d="M282 481 Q297 477.500 312.500 476.500" stroke-width="3.800"/>
  <path d="M283 486.500 Q298 483.500 313.500 482.300" stroke-width="3.600"/>
  <path d="M283 490.500 L314 487 L321 500.500 L291 505.800 L284 503 Z" fill="#231f1c" stroke-width="2"/>
  <g fill="#fff" stroke="none"><ellipse cx="286.600" cy="498" rx="1.300" ry="3.800" transform="rotate(12 286.600 498)"/><ellipse cx="294" cy="497.300" rx="2.300" ry="4.300" transform="rotate(8 294 497.300)"/><ellipse cx="308.500" cy="495.300" rx="3.200" ry="5.600" transform="rotate(-22 308.500 495.300)"/><ellipse cx="316.300" cy="493.800" rx="1.700" ry="4.300" transform="rotate(-18 316.300 493.800)"/></g>
  <path d="M282.500 426 q5 1 5 4.500 q0 3.500 -5 4.500 z" fill="#231f1c" stroke-width="1"/>
  <!-- band -->
  <path d="M50 529.200 L115 537.500 L172.500 543.400 L230 540.500 L279.700 538" stroke-width="3.600"/>
  <path d="M50 544.500 L115.600 556.600 L170 560 L212 561 L250 558 L282 554.400" stroke-width="4.400"/>
  <g fill="#231f1c" stroke="none"><ellipse cx="84" cy="539.800" rx="3.200" ry="2.500"/><ellipse cx="146.300" cy="548.600" rx="2.500" ry="3.400"/><ellipse cx="218.800" cy="549.800" rx="3.200" ry="3.200"/><ellipse cx="265.500" cy="545.500" rx="2.800" ry="2.200"/></g>
  <!-- left leg -->
  <path d="M65.500 550 Q66 580 68.500 597 L70.500 601 L117.800 602 Q117 575 114.500 556" stroke-width="3.800"/>
  <path d="M113.500 559 Q115.500 570 116.500 600" stroke-width="5.500"/>
  <path d="M66 550 Q80 550 92 553 Q105 557 110 568" stroke-width="3"/>
  <path d="M108 560 L116 560 L115 572 L110.500 569 Z" fill="#231f1c" stroke-width="1.500"/>
  <path d="M68 574.800 Q90 573.500 113 573" stroke-width="10" stroke-linecap="butt"/>
  <path d="M68.500 584.800 Q90 582.300 113 583.500" stroke-width="3.400"/>
  <path d="M70 575.500 Q74 574 78 573.500 M90 574.500 Q94 573.200 99 574.200" stroke="#fff" stroke-width="1.500"/>
  
  <!-- left wheel -->
  <ellipse cx="91" cy="627.700" rx="28.800" ry="24.300" stroke-width="4.800"/>
  <ellipse cx="91.500" cy="627" rx="20" ry="15.300" stroke-width="4" transform="rotate(12 91.500 627)"/>
  <ellipse cx="90.500" cy="626.500" rx="11.500" ry="9" stroke-width="3.600" transform="rotate(25 90.500 626.500)"/>
  <path d="M82 603 Q96 601 109 604 Q112 618 105 634 L100 624 Q96 619 88 619 Q90 610 82 603 Z" fill="#231f1c" stroke-width="2"/>
  <path d="M91 622.500 q3 2.500 6 0" stroke="#fff" stroke-width="2"/>
  <!-- right leg -->
  <path d="M160.500 562 Q159.500 590 159.300 609 L161 613 L206.400 623 " stroke-width="4"/>
  <path d="M211 563 Q210.500 575 209.500 590 Q208.500 606 206 622" stroke-width="6"/>
  <path d="M161 564.500 Q190 562 207 567" stroke-width="2.600"/>
  <path d="M161.500 579.300 Q185 577.300 209 578" stroke-width="8.500" stroke-linecap="butt"/>
  <path d="M161.500 589.500 Q185 587.500 207 584.500" stroke-width="3.400"/>
  <path d="M176 577.800 Q180 576.500 185 577.200" stroke="#fff" stroke-width="1.500"/>
  
  <!-- right wheel -->
  <ellipse cx="181.400" cy="645.400" rx="27.500" ry="24.800" stroke-width="5"/>
  <ellipse cx="184.200" cy="644.500" rx="18.800" ry="15.800" stroke-width="4" transform="rotate(15 184.200 644.500)"/>
  <ellipse cx="184.800" cy="643" rx="11.500" ry="9.500" stroke-width="3.600"/>
  <path d="M176 622.500 Q188 621.500 200 626 Q203 636 197 648 L192 637 Q187 633 180 635 Q182 628 176 622.500 Z" fill="#231f1c" stroke-width="2"/>
  <path d="M182 640.500 q3 2.500 6 0" stroke="#fff" stroke-width="2"/>
  <!-- ground -->
  <path d="M50 651.800 Q90 650 122 649" stroke-width="3.800"/>
  <path d="M50 652.500 L80 651" stroke-width="5"/>
  <path d="M129 649 L146 649.600" stroke-width="3.200"/>
  <path d="M148.500 649.600 L159 652.800" stroke-width="3.200"/>
  <path d="M212 656 Q250 653.500 289.500 651.300" stroke-width="2.600"/>
  <path d="M212 656.300 Q232 654.800 258 653.300" stroke-width="4"/>
</g>
</svg>

<div id="ctx">
  <div class="abs" style="left:26px;top:1px;width:1px;height:407px;background:#e2e2e2;border-right:1px solid #fafafa;width:2px"></div>
  <div class="abs" style="left:2px;top:24px;width:242px;height:21px;border:1px solid #aedaf3;border-radius:3px;background:linear-gradient(#e4f0fa,#d3e7f5)"></div>
  <div class="mi" style="top:5px">Con<u>v</u>ert To Artistic Text</div><div class="sc" style="top:5px">Ctrl+F8</div>
  <div class="mi" style="top:27px">Con<u>v</u>ert To Curves</div><div class="sc" style="top:27px">Ctrl+Q</div>
  <div class="mi g" style="top:49px"><u>M</u>ake Text Web Compatible</div>
  <div class="mi" style="top:71px"><u>S</u>pell Check...</div><div class="sc" style="top:71px">Ctrl+F12</div>
  <div class="mi" style="top:93px">F<u>i</u>t Text To Frame</div>
  <div class="sp" style="top:116px"></div>
  <div class="mi" style="top:123px"><u>U</u>ndo Stretch</div><div class="sc" style="top:123px">Ctrl+Z</div>
  <div class="mi" style="top:145px">Cu<u>t</u></div><div class="sc" style="top:145px">Ctrl+X</div>
  <div class="mi" style="top:167px"><u>C</u>opy</div><div class="sc" style="top:167px">Ctrl+C</div>
  <div class="mi" style="top:189px">De<u>l</u>ete</div><div class="sc" style="top:189px">Delete</div>
  <div class="mi" style="top:211px"><u>L</u>ock Object</div>
  <div class="sp" style="top:232px"></div>
  <div class="mi" style="top:241px"><u>O</u>rder</div><div class="ar" style="top:244px"></div>
  <div class="mi" style="top:263px"><u>S</u>tyles</div><div class="ar" style="top:266px"></div>
  <div class="mi" style="top:285px">I<u>n</u>ternet Links</div><div class="ar" style="top:288px"></div>
  <div class="mi g" style="top:307px"><u>J</u>ump to Hyperlink in Browser</div>
  <div class="sp" style="top:328px"></div>
  <div class="mi" style="top:337px">Overprint <u>F</u>ill</div>
  <div class="mi g" style="top:359px">Overprint <u>O</u>utline</div>
  <div class="sp" style="top:380px"></div>
  <div class="mi" style="top:389px">Propert<u>i</u>es</div><div class="sc" style="top:389px">Alt+Enter</div>
  <div class="abs" style="left:3px;top:385px;width:21px;height:21px;border:1px solid #aedaf3;border-radius:3px;background:#e0eefa"></div>
  <svg style="left:0;top:0" width="30" height="411" viewBox="0 0 30 411">
    <!-- convert to artistic -->
    <g stroke="#7a7f95" stroke-width="1" fill="#fff"><path d="M9.500 5.500h9v11h-9z"/><path d="M11 8.500h6M11 10.500h6M11 12.500h6" /></g><path d="M5 18l3.500-9 3.500 9M6.500 15h4" fill="none" stroke="#6a6f88" stroke-width="1.800"/>
    <!-- curves -->
    <circle cx="11.500" cy="33.500" r="6" fill="none" stroke="#5a5f78" stroke-width="1.200"/><g fill="#fff" stroke="#5a5f78" stroke-width="1"><rect x="10" y="26" width="3" height="3"/><rect x="10" y="38" width="3" height="3"/><rect x="4" y="32" width="3" height="3"/><rect x="16" y="32" width="3" height="3"/></g>
    <!-- spell -->
    <rect x="6" y="73" width="9" height="11" fill="#e02818"/><path d="M8 79l2 2 3.500-4" stroke="#fff" stroke-width="1.500" fill="none"/><path d="M16.500 73v11" stroke="#e02818" stroke-width="1.200"/><path d="M18.500 73v11" stroke="#e8a020" stroke-width="1"/>
    <!-- fit text -->
    <path d="M8.500 104l3-7.500 3 7.500M9.500 101.500h4" fill="none" stroke="#222" stroke-width="1.400"/><path d="M4.500 92.500h14v15h-14z" fill="none" stroke="#333" stroke-width="1" stroke-dasharray="2 2"/><path d="M4 92l3 3M19 92l-3 3M4 108l3-3M19 108l-3-3" stroke="#222" stroke-width="1.200"/>
    <!-- undo -->
    <path d="M5 126l7-6v4q8 0 8 6q0 4-5 5q2-2 1-4.500q-1-2-4-2v4z" fill="#4a4a5a"/>
    <!-- cut -->
    <g fill="none" stroke="#555a70" stroke-width="1.500"><circle cx="7.500" cy="148" r="2.200"/><circle cx="7.500" cy="155.500" r="2.200"/><path d="M9.500 149l10 5.500M9.500 154.500l10-6"/></g>
    <!-- copy -->
    <rect x="5.500" y="169.500" width="8" height="9" fill="#f5fafa" stroke="#9ac0c8"/><rect x="10.500" y="172.500" width="8" height="9" fill="#fff" stroke="#555a78"/><path d="M12 175.500h5M12 177.500h5M12 179.500h5" stroke="#555a78" stroke-width="1"/>
    <!-- delete -->
    <path d="M7.500 193.500h9l-1 10h-7z" fill="#fff" stroke="#555a78" stroke-width="1.200"/><path d="M5.500 192.500h13M10 190.500h4" stroke="#555a78" stroke-width="1.400"/><path d="M10.500 196v5M13.500 196v5" stroke="#555a78" stroke-width="1"/>
    <!-- lock -->
    <rect x="7" y="216" width="10" height="8" fill="#3d4285"/><path d="M9 216v-2.500q0-3 3-3t3 3v2.500" fill="none" stroke="#6a6f9a" stroke-width="1.500"/><rect x="11.500" y="218.500" width="1.500" height="3" fill="#c8cbe8"/>
    <!-- check -->
    <path d="M9 396l3 4 6-9" fill="none" stroke="#1a2a8a" stroke-width="1.600"/>
  </svg>
</div>

<div id="docker">
  <div class="abs" style="left:0;top:0;width:278px;height:19px;background:linear-gradient(90deg,rgba(255,255,255,.75),rgba(255,255,255,0) 70%),linear-gradient(#d3e9fa,#a9d5f4)"></div>
  <div class="lbl" style="left:9px;top:3px;font-size:12px;letter-spacing:-.15px">Object Properties</div>
  <svg style="left:221px;top:4px" width="12" height="10" viewBox="0 0 12 10"><path d="M1 1l4 4-4 4M6 1l4 4-4 4" fill="none" stroke="#3a4a66" stroke-width="1.500"/></svg>
  <div class="abs" style="left:239px;top:1px;width:17px;height:17px;border:1px solid #6d86a6;border-radius:2px;background:linear-gradient(#dce8f4,#a9c0da)"></div>
  <div class="abs" style="left:242px;top:10px;width:11px;height:5px;border:1px solid #3a5070;background:#eef4fa"></div>
  <div class="abs" style="left:259px;top:1px;width:17px;height:17px;border:1px solid #8a4a42;border-radius:2px;background:linear-gradient(#e8a79c,#c8503e)"></div>
  <svg style="left:262px;top:4px" width="11" height="11" viewBox="0 0 11 11"><path d="M1.500 1.500l8 8M9.500 1.500l-8 8" stroke="#fff" stroke-width="2.600"/></svg>
  <!-- tabs -->
  <div class="abs" style="left:12px;top:32px;width:21px;height:23px;border:1px solid #b8b8b8;border-bottom:none;background:#e6e6e6"></div>
  <div class="abs" style="left:57px;top:32px;width:21px;height:23px;border:1px solid #b8b8b8;border-bottom:none;background:#e6e6e6"></div>
  <div class="abs" style="left:78px;top:32px;width:22px;height:23px;border:1px solid #b8b8b8;border-bottom:none;background:#e6e6e6"></div>
  <div class="abs" style="left:100px;top:32px;width:22px;height:23px;border:1px solid #b8b8b8;border-bottom:none;background:#e6e6e6"></div>
  <div class="abs" style="left:122px;top:32px;width:21px;height:23px;border:1px solid #b8b8b8;border-bottom:none;background:#e6e6e6"></div>
  <!-- frame -->
  <div class="abs" style="left:10px;top:54px;width:234px;height:763px;border:1px solid #a0a0a0;background:#f0f0f0"></div>
  <div class="abs" style="left:32px;top:29px;width:25px;height:26px;border:1px solid #b8b8b8;border-bottom:none;background:#f0f0f0"></div>
  <svg style="left:0;top:0" width="160" height="60" viewBox="0 0 160 60">
    <!-- fill bucket -->
    <path d="M22 35l-6.500 7.500 5 6 7.500-6z" fill="#fff" stroke="#3a3a4a" stroke-width="1.300"/><path d="M16.500 43h9l-5 4.500z" fill="#e8821e"/><path d="M27.500 42q2.500 2 2 6" stroke="#e8821e" stroke-width="1.700" fill="none"/>
    <!-- pen nib -->
    <path d="M44.500 35l3 6.500-1.500 5h-3l-1.500-5z" fill="#fff" stroke="#3a3f60" stroke-width="1.200"/><path d="M44.500 39v5" stroke="#3a3f60" stroke-width="1"/><path d="M41 49.500h7" stroke="#3a3f60" stroke-width="1.600"/>
    <!-- frame icon -->
    <rect x="60.500" y="36.500" width="14" height="13" fill="#f8f8f8" stroke="#555" stroke-width="1"/><g fill="#333"><rect x="59" y="35" width="3" height="3"/><rect x="73" y="35" width="3" height="3"/><rect x="59" y="48" width="3" height="3"/><rect x="73" y="48" width="3" height="3"/></g>
    <!-- summary icon -->
    <rect x="82.500" y="36.500" width="14" height="13" fill="#f8f8f8" stroke="#555" stroke-width="1" stroke-dasharray="2 1"/><circle cx="89" cy="42" r="3.500" fill="#dde6f4" stroke="#667"/><path d="M91.500 44.500l3.500 3.500" stroke="#445" stroke-width="1.500"/>
    <!-- globe -->
    <circle cx="110.500" cy="43" r="6.500" fill="#2a86e8"/><path d="M104 43h13M110.500 36.500v13M105.500 39.500h10M105.500 46.500h10M107.500 37v12M113.500 37v12" stroke="#cfe6ff" stroke-width=".9" fill="none"/>
    <!-- A -->
    <path d="M127 50l5.500-14 5.500 14M129 45.500h7" fill="none" stroke="#5a5f7a" stroke-width="3.400"/><path d="M127 50l5.500-14 5.500 14M129 45.500h7" fill="none" stroke="#fff" stroke-width="1.400"/>
  </svg>
  <div class="lbl" style="left:17px;top:66px">Width</div>
  <div class="abs" style="left:52px;top:61px;width:105px;height:21px;background:#fff;border:1px solid #e2e2e2;border-radius:2px"></div>
  <div class="lbl" style="left:57px;top:65px">None</div>
  <svg style="left:144px;top:70px" width="9" height="5" viewBox="0 0 9 5"><path d="M0 0h9l-4.500 5z" fill="#111"/></svg>
  <div class="lbl gr" style="left:17px;top:96px">Color:</div>
  <div class="dbox" style="left:52px;top:90px;width:25px;height:25px"></div><div class="ddrop" style="left:76px;top:90px;width:17px;height:25px"></div>
  <div class="lbl gr" style="left:17px;top:129px">Style:</div>
  <div class="dbox" style="left:52px;top:124px;width:92px;height:28px"></div><div class="ddrop" style="left:143px;top:124px;width:17px;height:28px"></div>
  <div class="dbox" style="left:52px;top:160px;width:36px;height:41px"></div><div class="ddrop" style="left:87px;top:160px;width:16px;height:41px"></div>
  <div class="dbox" style="left:109px;top:160px;width:36px;height:41px"></div><div class="ddrop" style="left:144px;top:160px;width:16px;height:41px"></div>
  <div class="abs" style="left:17px;top:218px;width:13px;height:13px;border:1px solid #b8b8b8;background:#f4f4f4"></div>
  <div class="lbl gr" style="left:32px;top:219px;letter-spacing:-.25px">Behind fill</div>
  <div class="abs" style="left:17px;top:239px;width:13px;height:13px;border:1px solid #b8b8b8;background:#f4f4f4"></div>
  <div class="lbl gr" style="left:32px;top:240px;letter-spacing:-.25px">Scale with image</div>
  <div class="abs" style="left:86px;top:294px;width:73px;height:21px;border:1px solid #707070;border-radius:3px;background:linear-gradient(#f4f4f4,#ebebeb 50%,#dddddd 50%,#d0d0d0);box-shadow:inset 0 0 0 1px #fcfcfc"></div>
  <div class="lbl" style="left:91px;top:298px">Advanced...</div>
  <!-- bottom buttons -->
  <div class="abs" style="left:129px;top:826px;width:35px;height:21px;border:1px solid #707070;border-radius:3px;background:linear-gradient(#f4f4f4,#ebebeb 50%,#dddddd 50%,#d0d0d0);box-shadow:inset 0 0 0 1px #fcfcfc"></div>
  <svg style="left:139px;top:828px" width="16" height="17" viewBox="0 0 16 17"><rect x="3" y="8" width="10" height="7" fill="#4a4f95"/><path d="M8.500 8v-2.500q0-3 2.500-3t2.500 3" fill="none" stroke="#55598a" stroke-width="1.500"/><rect x="7.500" y="10" width="1.500" height="3" fill="#c8cbe8"/></svg>
  <div class="abs" style="left:172px;top:826px;width:73px;height:21px;border:1px solid #b4b4b4;border-radius:3px;background:#f4f4f4"></div>
  <div class="lbl gr" style="left:194px;top:830px;color:#9a9a9a">Apply</div>
  <!-- side tabs -->
  <div class="abs" style="left:254px;top:19px;width:1px;height:836px;background:#d8d8d8"></div>
  <div class="abs" style="left:255px;top:23px;width:19px;height:130px;border:1px solid #c4c4c4;border-left:none;border-radius:0 4px 4px 0;background:#ececec"></div>
  <div class="abs" style="left:253px;top:153px;width:24px;height:137px;border:1px solid #c4c4c4;border-left:none;border-radius:0 4px 4px 0;background:#f0f0f0"></div>
  <div class="abs" style="left:255px;top:291px;width:22px;height:580px;border:1px solid #c4c4c4;border-left:none;border-radius:0 4px 0 0;background:#f0f0f0"></div>
  <svg style="left:255px;top:23px" width="20" height="24" viewBox="0 0 20 24"><path d="M4 21l5.500-14 5.500 14M6 16.500h7" fill="none" stroke="#5a5f7a" stroke-width="3.400"/><path d="M4 21l5.500-14 5.500 14M6 16.500h7" fill="none" stroke="#fff" stroke-width="1.400"/><path d="M1 5h3M2.500 3.500v3M15 5h3M16.500 3.500v3" stroke="#222" stroke-width="1"/></svg>
  <div class="lbl" style="left:271px;top:47px;font-size:11px;letter-spacing:0;transform-origin:0 0;transform:rotate(90deg);color:#444">Character Formatting</div>
  <svg style="left:257px;top:160px" width="18" height="18" viewBox="0 0 18 18"><path d="M2 7l6-5v10z" fill="#e8c040" stroke="#a08020" stroke-width=".8"/><rect x="7" y="5" width="9" height="11" fill="#c8cce0" stroke="#5a5f80"/><path d="M8 7l7 7M15 7l-7 7" stroke="#5a5f80" stroke-width="1.200"/></svg>
  <div class="lbl" style="left:271px;top:180px;font-size:11px;transform-origin:0 0;transform:rotate(90deg);color:#000">Object Properties</div>
  <svg style="left:260px;top:273px" width="10" height="10" viewBox="0 0 10 10"><path d="M1.500 1.500l7 7M8.500 1.500l-7 7" stroke="#8a8a8a" stroke-width="2"/></svg>
</div>
<div class="abs" style="left:1259px;top:138px;width:21px;height:855px;background:#f0f0f0;border-left:1px solid #dcdcdc"></div>
<svg style="left:1259px;top:138px" width="21" height="855" viewBox="0 0 21 855"><g fill="#b5b5b5"><rect x="5" y="4" width="1" height="2"/><rect x="8" y="4" width="1" height="2"/><rect x="11" y="4" width="1" height="2"/><rect x="14" y="4" width="1" height="2"/></g><circle cx="11" cy="17" r="6.500" fill="#f4f4f4" stroke="#c4c4c4"/><path d="M9 13.500l5 3.500-5 3.500z" fill="#111"/><path d="M7 36l4-4 4 4z" fill="#777"/><rect x="3.500" y="44.500" width="15" height="14" fill="#fff" stroke="#111" stroke-width="1.400"/><path d="M4 45l14 13M18 45l-14 13" stroke="#111" stroke-width="1"/><path d="M7 817h8l-4 4z" fill="#333"/><path d="M8 829v10" stroke="#111" stroke-width="1.600"/><path d="M15 829v10l-6-5z" fill="#111"/></svg>
<div class="abs" style="left:1262px;top:199px;width:16px;height:17px;background:#231f1c;border-bottom:1px solid rgba(0,0,0,.18)"></div>
<div class="abs" style="left:1262px;top:216px;width:16px;height:17px;background:#3b3a39;border-bottom:1px solid rgba(0,0,0,.18)"></div>
<div class="abs" style="left:1262px;top:233px;width:16px;height:17px;background:#4e4d4c;border-bottom:1px solid rgba(0,0,0,.18)"></div>
<div class="abs" style="left:1262px;top:250px;width:16px;height:17px;background:#5f5e5d;border-bottom:1px solid rgba(0,0,0,.18)"></div>
<div class="abs" style="left:1262px;top:267px;width:16px;height:17px;background:#727170;border-bottom:1px solid rgba(0,0,0,.18)"></div>
<div class="abs" style="left:1262px;top:284px;width:16px;height:17px;background:#868584;border-bottom:1px solid rgba(0,0,0,.18)"></div>
<div class="abs" style="left:1262px;top:301px;width:16px;height:17px;background:#9a9998;border-bottom:1px solid rgba(0,0,0,.18)"></div>
<div class="abs" style="left:1262px;top:318px;width:16px;height:17px;background:#aeadac;border-bottom:1px solid rgba(0,0,0,.18)"></div>
<div class="abs" style="left:1262px;top:335px;width:16px;height:17px;background:#c2c1c0;border-bottom:1px solid rgba(0,0,0,.18)"></div>
<div class="abs" style="left:1262px;top:352px;width:16px;height:17px;background:#dadada;border-bottom:1px solid rgba(0,0,0,.18)"></div>
<div class="abs" style="left:1262px;top:369px;width:16px;height:17px;background:#ffffff;border-bottom:1px solid rgba(0,0,0,.18)"></div>
<div class="abs" style="left:1262px;top:386px;width:16px;height:17px;background:#2e1a7c;border-bottom:1px solid rgba(0,0,0,.18)"></div>
<div class="abs" style="left:1262px;top:403px;width:16px;height:17px;background:#0a80dc;border-bottom:1px solid rgba(0,0,0,.18)"></div>
<div class="abs" style="left:1262px;top:420px;width:16px;height:17px;background:#0a9648;border-bottom:1px solid rgba(0,0,0,.18)"></div>
<div class="abs" style="left:1262px;top:437px;width:16px;height:17px;background:#fbec13;border-bottom:1px solid rgba(0,0,0,.18)"></div>
<div class="abs" style="left:1262px;top:454px;width:16px;height:17px;background:#e83c14;border-bottom:1px solid rgba(0,0,0,.18)"></div>
<div class="abs" style="left:1262px;top:471px;width:16px;height:17px;background:#ee2a7b;border-bottom:1px solid rgba(0,0,0,.18)"></div>
<div class="abs" style="left:1262px;top:488px;width:16px;height:17px;background:#a3406f;border-bottom:1px solid rgba(0,0,0,.18)"></div>
<div class="abs" style="left:1262px;top:505px;width:16px;height:17px;background:#f5870a;border-bottom:1px solid rgba(0,0,0,.18)"></div>
<div class="abs" style="left:1262px;top:522px;width:16px;height:17px;background:#f7a1a1;border-bottom:1px solid rgba(0,0,0,.18)"></div>
<div class="abs" style="left:1262px;top:539px;width:16px;height:17px;background:#6f625c;border-bottom:1px solid rgba(0,0,0,.18)"></div>
<div class="abs" style="left:1262px;top:556px;width:16px;height:17px;background:#b9b1d9;border-bottom:1px solid rgba(0,0,0,.18)"></div>
<div class="abs" style="left:1262px;top:573px;width:16px;height:17px;background:#8e82bd;border-bottom:1px solid rgba(0,0,0,.18)"></div>
<div class="abs" style="left:1262px;top:590px;width:16px;height:17px;background:#6379bf;border-bottom:1px solid rgba(0,0,0,.18)"></div>
<div class="abs" style="left:1262px;top:607px;width:16px;height:17px;background:#6b579f;border-bottom:1px solid rgba(0,0,0,.18)"></div>
<div class="abs" style="left:1262px;top:624px;width:16px;height:17px;background:#786d99;border-bottom:1px solid rgba(0,0,0,.18)"></div>
<div class="abs" style="left:1262px;top:641px;width:16px;height:17px;background:#46557c;border-bottom:1px solid rgba(0,0,0,.18)"></div>
<div class="abs" style="left:1262px;top:658px;width:16px;height:17px;background:#46455c;border-bottom:1px solid rgba(0,0,0,.18)"></div>
<div class="abs" style="left:1262px;top:675px;width:16px;height:17px;background:#5b6e8d;border-bottom:1px solid rgba(0,0,0,.18)"></div>
<div class="abs" style="left:1262px;top:692px;width:16px;height:17px;background:#0d70c5;border-bottom:1px solid rgba(0,0,0,.18)"></div>
<div class="abs" style="left:1262px;top:709px;width:16px;height:17px;background:#6abaef;border-bottom:1px solid rgba(0,0,0,.18)"></div>
<div class="abs" style="left:1262px;top:726px;width:16px;height:17px;background:#8faac1;border-bottom:1px solid rgba(0,0,0,.18)"></div>
<div class="abs" style="left:1262px;top:743px;width:16px;height:17px;background:#75868f;border-bottom:1px solid rgba(0,0,0,.18)"></div>
<div class="abs" style="left:1262px;top:760px;width:16px;height:17px;background:#5f676c;border-bottom:1px solid rgba(0,0,0,.18)"></div>
<div class="abs" style="left:1262px;top:777px;width:16px;height:17px;background:#424548;border-bottom:1px solid rgba(0,0,0,.18)"></div>
<div class="abs" style="left:1262px;top:794px;width:16px;height:17px;background:#3f5b5d;border-bottom:1px solid rgba(0,0,0,.18)"></div>
<div class="abs" style="left:1262px;top:811px;width:16px;height:17px;background:#25706a;border-bottom:1px solid rgba(0,0,0,.18)"></div>
<div class="abs" style="left:1262px;top:828px;width:16px;height:17px;background:#48807c;border-bottom:1px solid rgba(0,0,0,.18)"></div>
<div class="abs" style="left:1262px;top:845px;width:16px;height:17px;background:#208f7c;border-bottom:1px solid rgba(0,0,0,.18)"></div>
<div class="abs" style="left:1262px;top:862px;width:16px;height:17px;background:#1f8f6b;border-bottom:1px solid rgba(0,0,0,.18)"></div>
<div class="abs" style="left:1262px;top:879px;width:16px;height:17px;background:#0da8c9;border-bottom:1px solid rgba(0,0,0,.18)"></div>
<div class="abs" style="left:1262px;top:896px;width:16px;height:17px;background:#2089a0;border-bottom:1px solid rgba(0,0,0,.18)"></div>
<div class="abs" style="left:1262px;top:913px;width:16px;height:17px;background:#8ca9a0;border-bottom:1px solid rgba(0,0,0,.18)"></div>
<div class="abs" style="left:1262px;top:930px;width:16px;height:17px;background:#a6ded1;border-bottom:1px solid rgba(0,0,0,.18)"></div>

<div class="abs" style="left:0;top:993px;width:1280px;height:31px;background:linear-gradient(#a8a8a8 0,#6a6a6a 1px,#555 2px,#3a3a3a 7px,#242424 12px,#0a0a0a 13px,#050505 100%)"></div>
<div class="abs" style="left:10px;top:991px;width:41px;height:41px;border-radius:50%;background:radial-gradient(circle at 50% 35%,#8fb4d8 0,#3f6f9f 40%,#1a3a5c 70%,#0c1c30 100%);box-shadow:0 0 0 1px #0a1420,0 0 3px 1px rgba(160,190,220,.5)"></div>
<svg style="left:18px;top:999px" width="24" height="22" viewBox="0 0 24 22"><path d="M2 4q4-3 9-1l-1.500 8q-4-2-9 1z" fill="#e8542c"/><path d="M12.500 3.500q5 2.500 9.500-.5l-1.500 8q-4.500 3-9.500.5z" fill="#8cc63f"/><path d="M.500 13q4-3 9-1l-1.500 8q-4-2-9 1z" fill="#3a96dd"/><path d="M10.500 12.500q5 2.500 9.500-.5l-1.500 8q-4.500 3-9.500.5z" fill="#f9c513"/></svg>
<div class="abs" style="left:64px;top:996px;width:157px;height:27px;border:1px solid #6a6a6a;border-radius:3px;background:linear-gradient(#3a3a3a,#1c1c1c 45%,#060606 50%,#0c0c0c);box-shadow:inset 0 0 0 1px rgba(255,255,255,.12)"></div>
<svg style="left:73px;top:1002px" width="17" height="17" viewBox="0 0 17 17"><rect x="0" y="0" width="16" height="16" fill="#86b738"/><path d="M2 2 L8 3 L11 8 L9 9 L12 14 L6 13 L5 8 L3 7 Z" fill="#f4f9e4"/><path d="M4 3.500 L7.500 4.500 L9 7.500 L6 7 Z" fill="#5e8f1e"/></svg>
<div class="t" style="left:93px;top:1003px;font-size:12px;letter-spacing:-.25px;color:#fff">CorelDRAW X4 - [C:...</div>
<div class="t" style="left:1220px;top:1003px;font-size:12px;color:#fff">1:49 PM</div>
<svg style="left:1130px;top:998px" width="80" height="22" viewBox="0 0 80 22">
  <path d="M9 7l-4 4 4 4" fill="none" stroke="#fff" stroke-width="2"/>
  <rect x="19" y="6" width="11" height="9" fill="#9a9a9a"/><path d="M19 6v-2M22 6v-2M25 6v-2M28 6v-2" stroke="#c0c0c0" stroke-width="1.500"/><circle cx="30" cy="13" r="4.500" fill="#f5b515"/><rect x="29.300" y="10" width="1.500" height="4" fill="#333"/><rect x="29.300" y="15" width="1.500" height="1.500" fill="#333"/>
  <rect x="47" y="5" width="10" height="8" fill="#dfe9f5" stroke="#6080a8"/><rect x="52" y="9" width="10" height="8" fill="#dfe9f5" stroke="#6080a8"/><circle cx="57" cy="15" r="4" fill="#2a8ad8"/><path d="M54 15h6M57 12v6" stroke="#9fd0ff" stroke-width=".8"/>
  <path d="M63 9h3l4-4v12l-4-4h-3z" fill="#e8e8e8"/><circle cx="73" cy="15" r="4.500" fill="#d82020"/><path d="M71 13l4 4M75 13l-4 4" stroke="#fff" stroke-width="1.400"/>
</svg>

</div>
</body></html>
